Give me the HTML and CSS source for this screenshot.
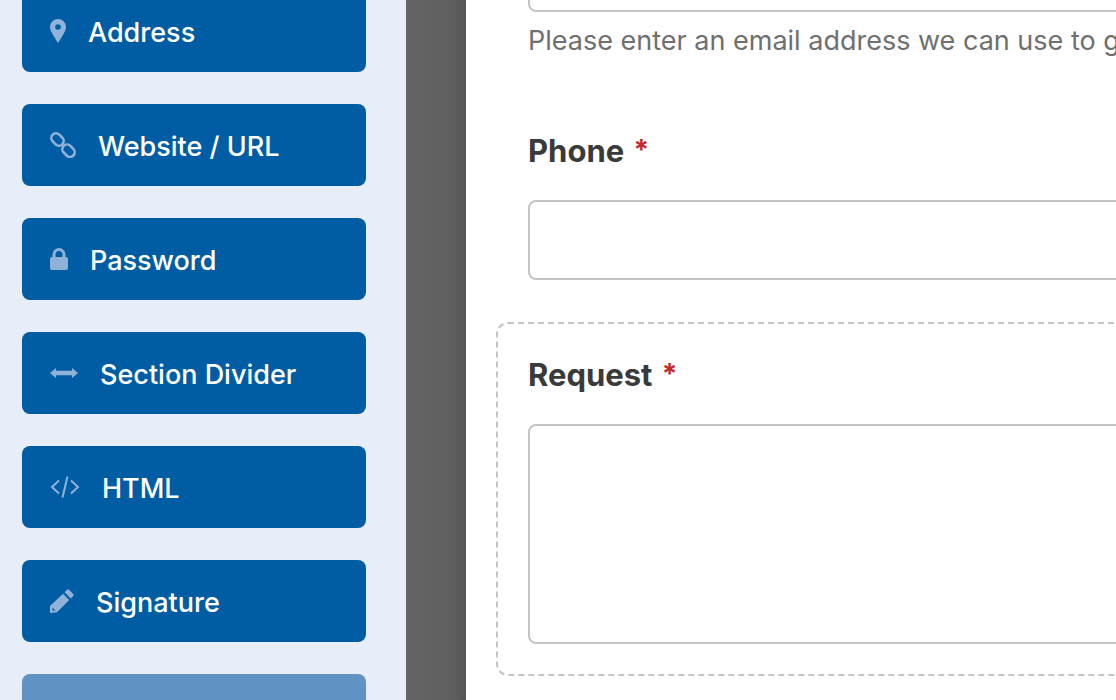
FILE: index.html
```html
<!DOCTYPE html>
<html lang="en">
<head>
    <meta charset="UTF-8">
    <title>Form Builder</title>
    <link rel="stylesheet" href="styles.css">
</head>
<body>
    <div class="builder">
        <aside class="sidebar">
            <div class="field-btn">
                <svg class="icon" width="16" height="24" viewBox="0 0 16 24"><path fill-rule="evenodd" d="M8 0a8 8 0 0 1 8 8c0 3.400-1.600 5.400-3.300 8.500L8 24l-4.700-7.500C1.600 13.400 0 11.400 0 8a8 8 0 0 1 8-8zm0 5.200a2.800 2.800 0 1 0 0 5.600 2.800 2.800 0 0 0 0-5.600z"/></svg>
                <span>Address</span>
            </div>
            <div class="field-btn">
                <svg class="icon" width="26" height="26" viewBox="0 0 26 26"><g class="line" stroke-width="2.600"><rect x="0.700" y="2.800" width="13.600" height="9.400" rx="4.700" transform="rotate(45 7.500 7.500)"/><rect x="11.700" y="14" width="13.600" height="9.400" rx="4.700" transform="rotate(45 18.500 18.700)"/></g></svg>
                <span>Website / URL</span>
            </div>
            <div class="field-btn">
                <svg class="icon" width="18" height="22" viewBox="0 0 18 22"><path fill-rule="evenodd" d="M9 0a6.500 6.500 0 0 1 6.500 6.500V9H16a2 2 0 0 1 2 2v9a2 2 0 0 1-2 2H2a2 2 0 0 1-2-2v-9a2 2 0 0 1 2-2h.5V6.500A6.500 6.500 0 0 1 9 0zm0 3a3.500 3.500 0 0 0-3.500 3.500V9h7V6.500A3.500 3.500 0 0 0 9 3z"/></svg>
                <span>Password</span>
            </div>
            <div class="field-btn">
                <svg class="icon" width="28" height="10" viewBox="0 0 28 10"><path d="M0 5l6-5v2.800h16V0l6 5-6 5V7.200H6V10z"/></svg>
                <span>Section Divider</span>
            </div>
            <div class="field-btn">
                <svg class="icon" width="30" height="22" viewBox="0 0 30 22"><g class="line" stroke-width="2"><path d="M9 4.500L2 11l7 6.500"/><path d="M21 4.500l7 6.500-7 6.500"/><path d="M17.500 .5L12.500 21.500"/></g></svg>
                <span>HTML</span>
            </div>
            <div class="field-btn">
                <svg class="icon" width="24" height="24" viewBox="0 0 24 24"><path fill-rule="evenodd" d="M17 0.800a1.500 1.500 0 0 1 2.100 0l4.100 4.100a1.500 1.500 0 0 1 0 2.100l-2.400 2.400-6.200-6.200zM13 4.800l6.200 6.200L7 23.200 0 24v-7zM2.500 18.500V21.500h3z"/></svg>
                <span>Signature</span>
            </div>
            <div class="field-btn is-faded"></div>
        </aside>

        <div class="backdrop"></div>

        <main class="preview">
            <div class="form">
                <div class="field">
                    <div class="input"></div>
                    <p class="hint">Please enter an email address we can use to get in touch with you.</p>
                </div>
                <div class="field field-phone">
                    <label class="label">Phone <span class="req">*</span></label>
                    <div class="input"></div>
                </div>
                <div class="field field-active">
                    <label class="label">Request <span class="req">*</span></label>
                    <div class="input textarea"></div>
                </div>
            </div>
        </main>
    </div>
</body>
</html>
```

FILE: styles.css
```css
* {
    box-sizing: border-box;
}
html, body {
    margin: 0;
    height: 700px;
    overflow: hidden;
}
body {
    font-family: 'Inter', 'Liberation Sans', sans-serif;
    background-color: white;
}
.builder {
    display: flex;
    height: 700px;
    overflow: hidden;
}
.sidebar {
    flex: 0 0 406px;
    padding: 0 40px 0 22px;
    background-color: #e7eef9;
}
.field-btn {
    display: flex;
    align-items: center;
    gap: 22px;
    height: 82px;
    margin-bottom: 32px;
    padding-left: 28px;
    border-radius: 8px;
    background-color: #015da3;
    color: white;
    font-size: 27px;
    font-weight: 500;
    line-height: 36px;
}
.field-btn span {
    padding-top: 3px;
}
.field-btn:first-child {
    margin-top: -10px;
}
.field-btn.is-faded {
    background-color: #6093c3;
}
.icon {
    flex: none;
    fill: #8fb3d8;
}
.icon .line {
    fill: none;
    stroke: #8fb3d8;
}
.backdrop {
    flex: 0 0 60px;
    background: linear-gradient(to right, #646464, #606060 70%, #565656);
}
.preview {
    flex: 1;
    min-width: 0;
    overflow: hidden;
    background-color: white;
}
.form {
    width: 1000px;
    margin-top: -68px;
    padding-left: 30px;
}
.field {
    padding: 0 32px;
}
.field-phone {
    margin-top: 73px;
}
.field-active {
    margin-top: 42px;
    padding-top: 31px;
    padding-bottom: 30px;
    border: 2px dashed #c4c4c4;
    border-radius: 12px;
    padding-left: 30px;
}
.label {
    display: block;
    margin-bottom: 28px;
    color: #3a3a3a;
    font-size: 31px;
    font-weight: 700;
    line-height: 40px;
}
.req {
    margin-left: 2px;
    color: #c5272b;
    font-size: 28px;
    font-weight: 700;
    position: relative;
    top: -2px;
}
.input {
    height: 80px;
    border: 2px solid #c4c4c4;
    border-radius: 8px;
    background-color: white;
}
.textarea {
    height: 220px;
}
.hint {
    margin: 12px 0 0;
    color: #6f6f6f;
    font-size: 27px;
    line-height: 34px;
    white-space: nowrap;
}
```
